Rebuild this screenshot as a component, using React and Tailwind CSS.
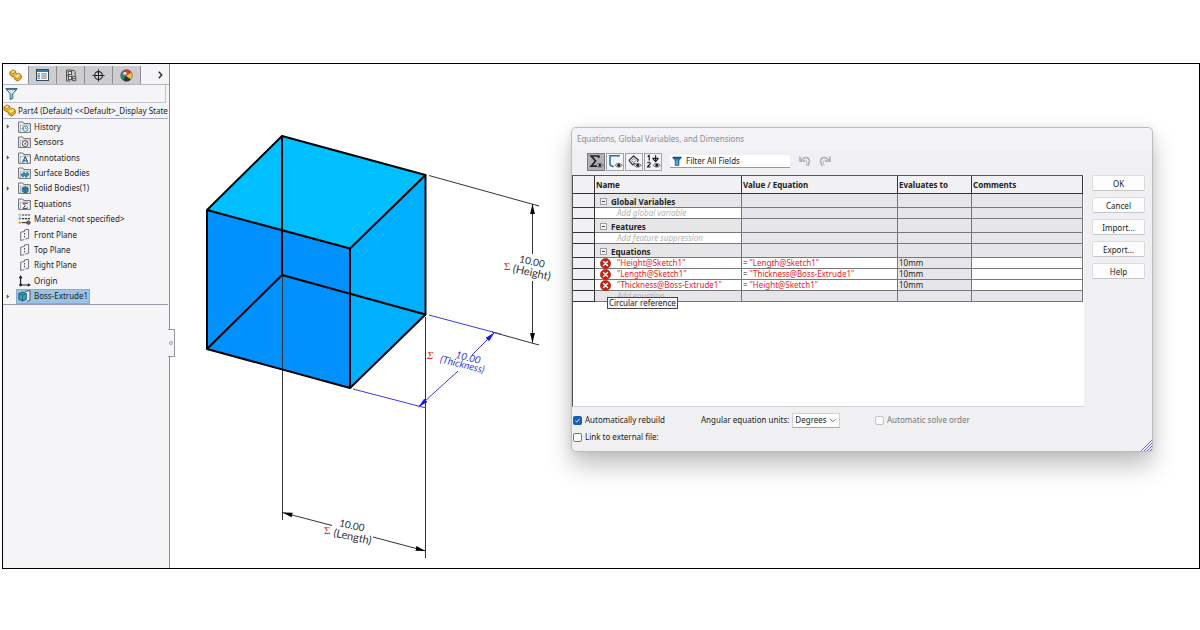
import React from "react";

/* ---------- icons ---------- */

function PartIcon() {
  return (
    <svg viewBox="0 0 14 14" className="h-[13px] w-[13px] shrink-0" aria-hidden="true">
      <path
        d="M1 3.2 4.4 1l3 1.5v2.3l1.1.7c.6-1 2.6-1.1 3.4-.2l1.3 1.5v3.3L9.4 13 6.2 11.2V9.6L1 6.4Z"
        fill="#f0bf2c"
        stroke="#7a5a10"
        strokeWidth=".8"
        strokeLinejoin="round"
      />
      <path d="M1.8 3.4 4.4 1.8l2.2 1.1-2.4 1.7ZM6.6 8.8l1.8-2.4c1-1.2 2.4-.8 3.2.2L9.2 9.9Z" fill="#ffe684" />
      <path d="M1.2 3.6 4.2 5v2.8M4.2 5l3-2M6.4 9 9.2 10.4V12.6M9.2 10.4 13 7.2" fill="none" stroke="#9a7418" strokeWidth=".6" />
    </svg>
  );
}

function ListTabIcon() {
  return (
    <svg viewBox="0 0 13 12" className="h-[12px] w-[13px]" aria-hidden="true">
      <rect x=".5" y=".5" width="12" height="11" fill="#fff" stroke="#33495c" />
      <rect x="1" y="1" width="11" height="2" fill="#2f7fb0" />
      <path d="M1.5 4.9h2.4M1.5 7h2.4M1.5 9.1h2.4" stroke="#2f7fb0" strokeWidth="1.3" />
      <path d="M5.3 4.9h5.6M5.3 7h5.6M5.3 9.1h5.6" stroke="#51606d" strokeWidth=".9" />
    </svg>
  );
}

function ConfigTabIcon() {
  return (
    <svg viewBox="0 0 12 13" className="h-[13px] w-[12px]" fill="none" stroke="#444" strokeWidth=".9" aria-hidden="true">
      <path d="M1.5 1v11h4M1.5 6.5h2M1.5 1h5v3.5" />
      <rect x="3.2" y="2.6" width="3.4" height="3" fill="#eee" />
      <rect x="3.4" y="7.4" width="3" height="3.2" fill="#eee" />
      <path d="M6.6 1.4h2.6l1 1.4v4M7.4 7.4h3.4v4.4H7.4zM8 9.6h2.4" />
    </svg>
  );
}

function TargetIcon() {
  return (
    <svg viewBox="0 0 13 13" className="h-[13px] w-[13px]" fill="none" stroke="#222" aria-hidden="true">
      <circle cx="6.5" cy="6.5" r="3.9" strokeWidth="1.1" />
      <path d="M6.5.5v12M.5 6.5h12" strokeWidth="1" />
    </svg>
  );
}

function AppearanceIcon() {
  return (
    <svg viewBox="0 0 13 13" className="h-[13px] w-[13px]" aria-hidden="true">
      <circle cx="6.5" cy="6.5" r="5.8" fill="#2f8a4c" />
      <path d="M6 7 2.6 2.2A5.8 5.8 0 0 1 11.4 3.4Z" fill="#dd3a2c" />
      <path d="M6 7 11.4 3.4a5.8 5.8 0 0 1-.6 7Z" fill="#f3c634" />
      <path d="M6 7 10.8 10.4A5.8 5.8 0 0 1 3 11.1Z" fill="#2b3640" />
      <path d="M6 7 .7 6.2A5.8 5.8 0 0 1 2.6 2.2Z" fill="#3f7fc4" />
      <ellipse cx="5" cy="4.4" rx="1.8" ry="1.4" fill="#fff" opacity=".8" />
      <circle cx="6.5" cy="6.5" r="5.8" fill="none" stroke="#444" strokeWidth=".5" />
    </svg>
  );
}

function FilterOutlineIcon() {
  return (
    <svg viewBox="0 0 13 13" className="h-[13px] w-[13px]" aria-hidden="true">
      <path d="M.8 1.6h11.4L7.8 6.8v4.6l-2.6 1V6.8Z" fill="#dcebf5" stroke="#2b5a7c" strokeWidth="1" strokeLinejoin="round" />
      <path d="M1.5 2.6h10" stroke="#2b5a7c" strokeWidth=".8" />
      <path d="M6 6.8v4.6" stroke="#54a0cc" strokeWidth="1.1" />
    </svg>
  );
}

function FolderIcon({ children }) {
  return (
    <svg viewBox="0 0 13 12" className="h-[12px] w-[13px] shrink-0" aria-hidden="true">
      <path d="M.6 11.4V1h4.2l1 1.6h6.6v8.8Z" fill="#f3f4f6" stroke="#5c6066" strokeWidth=".9" />
      <path d="M2.4 11V4.2h9.8" fill="none" stroke="#8b8f95" strokeWidth=".6" />
      {children}
    </svg>
  );
}

function HistoryIcon() {
  return (
    <FolderIcon>
      <circle cx="7.4" cy="7.6" r="2.6" fill="#fff" stroke="#2f79a8" strokeWidth=".9" />
      <path d="M7.4 6v1.7h1.4M3.6 8.2l1-1.4 1.2 1.4" fill="none" stroke="#2f79a8" strokeWidth=".8" />
    </FolderIcon>
  );
}

function SensorsIcon() {
  return (
    <FolderIcon>
      <circle cx="7.2" cy="7.6" r="2.9" fill="#fff" stroke="#444" strokeWidth="1" />
      <path d="M7.2 7.8 8.4 5.8" stroke="#c33" strokeWidth="1" />
      <circle cx="7.2" cy="7.8" r=".9" fill="#555" />
    </FolderIcon>
  );
}

function AnnotationsIcon() {
  return (
    <FolderIcon>
      <path d="M4.6 10.6 7.2 4.8l2.6 5.8M5.6 8.8h3.2" fill="none" stroke="#2569a0" strokeWidth="1.2" />
    </FolderIcon>
  );
}

function SurfaceIcon() {
  return (
    <FolderIcon>
      <path d="M2.8 7.8 6 5.2l1.6 1.4L9.6 5.2l1.6 2.4L8.2 10.4 6.4 8.8 4.6 10Z" fill="#2f8fb0" stroke="#1c5d78" strokeWidth=".6" />
    </FolderIcon>
  );
}

function SolidIcon() {
  return (
    <FolderIcon>
      <path d="M4.2 6 7.2 4.6 10.2 6v3.6L7.2 11 4.2 9.6Z" fill="#2f8fb0" stroke="#1a4f66" strokeWidth=".7" />
      <path d="M4.2 6l3 1.3 3-1.3M7.2 7.3V11" fill="none" stroke="#123c4f" strokeWidth=".6" />
    </FolderIcon>
  );
}

function EquationsIcon() {
  return (
    <FolderIcon>
      <path d="M9.2 6.2V5.2H5l2.2 2.5L5 10.4h4.2v-1" fill="none" stroke="#333" strokeWidth=".9" />
    </FolderIcon>
  );
}

function MaterialIcon() {
  return (
    <svg viewBox="0 0 13 12" className="h-[12px] w-[13px] shrink-0" aria-hidden="true">
      <path d="M4 2h8M4 5.6h8" stroke="#333" strokeWidth="1.1" strokeDasharray="2.2 .7" />
      <path d="M3.6 9.6h6" stroke="#333" strokeWidth="1.1" />
      <circle cx="1.8" cy="2" r="1.1" fill="#fff" stroke="#888" strokeWidth=".6" />
      <circle cx="1.8" cy="5.6" r="1.2" fill="#4f9fd0" />
      <circle cx="1.8" cy="9.6" r="1.4" fill="#e8b020" />
      <circle cx="10.4" cy="9.6" r="1.7" fill="#777" stroke="#222" strokeWidth=".9" />
    </svg>
  );
}

function PlaneIcon() {
  return (
    <svg viewBox="0 0 13 12" className="h-[12px] w-[13px] shrink-0" fill="none" stroke="#666" strokeWidth=".9" aria-hidden="true">
      <path d="M6.6 2.4 2.7 3.2v8.2l3.6-.8M6.6 2.4V.9l4-.6v9l-3.2.7" />
      <path d="M6.6 4v1.6M6.6 6.8v1.6" stroke="#333" />
    </svg>
  );
}

function OriginIcon() {
  return (
    <svg viewBox="0 0 13 12" className="h-[12px] w-[13px] shrink-0" aria-hidden="true">
      <path d="M2.6 2v8H11" fill="none" stroke="#222" strokeWidth="1.2" />
      <path d="M2.6 0 4.6 3.2H.6ZM13 10 9.8 8.2v3.6Z" fill="#222" />
      <circle cx="2.6" cy="10" r="1.4" fill="#222" />
    </svg>
  );
}

function ExtrudeIcon() {
  return (
    <svg viewBox="0 0 13 12" className="h-[12px] w-[13px] shrink-0" aria-hidden="true">
      <path d="M7 1.4 12 .6v9.6l-3 1.2" fill="#e8eef2" stroke="#444" strokeWidth=".9" />
      <path d="M.8 3.6 4.4 2l4 1.4v5.8L4.6 11 .8 9.4Z" fill="#3aa0b8" stroke="#13505f" strokeWidth=".8" />
      <path d="M.8 3.6l3.8 1.6 3.8-1.8M4.6 5.2V11" fill="none" stroke="#13505f" strokeWidth=".7" />
    </svg>
  );
}

function Eye() {
  return (
    <g>
      <path d="M7.2 11.3c1.8-2.4 5.2-2.4 7 0-1.8 2.3-5.2 2.3-7 0Z" fill="#fff" stroke="#333" strokeWidth=".8" />
      <circle cx="10.8" cy="11.2" r="1.5" fill="#222" />
    </g>
  );
}

function SigmaViewIcon() {
  return (
    <svg viewBox="0 0 15 15" className="h-[15px] w-[15px]" aria-hidden="true">
      <path d="M9.8 4V2H2.2l4.4 5-4.4 5.2h6" fill="none" stroke="#222" strokeWidth="1.7" />
      <Eye />
    </svg>
  );
}

function SketchViewIcon() {
  return (
    <svg viewBox="0 0 15 15" className="h-[15px] w-[15px]" aria-hidden="true">
      <path d="M11.8 1.8H2v7.6c0 2 1.4 3 3.6 3" fill="none" stroke="#1c6fa8" strokeWidth="1.5" />
      <Eye />
    </svg>
  );
}

function DimensionViewIcon() {
  return (
    <svg viewBox="0 0 15 15" className="h-[15px] w-[15px]" aria-hidden="true">
      <path d="M2 6.4 6.6 2l4.8 4-1.2 2M2 6.4l3.6 4.4 2.4-1.6" fill="none" stroke="#333" strokeWidth="1.3" strokeLinejoin="round" />
      <path d="M4.6 6.6 6.8 4.6l2 1.8-2.2 2.2Z" fill="#fff" stroke="#2a6e96" strokeWidth=".8" />
      <Eye />
    </svg>
  );
}

function OrderedViewIcon() {
  return (
    <svg viewBox="0 0 15 15" className="h-[15px] w-[15px]" aria-hidden="true">
      <path d="M1.6 2.4 3.2 1.4V6.4M1.6 9.2c.4-1.4 2.8-1.2 2.6.4-.2 1.2-2.2 2-2.6 3.2h2.8" fill="none" stroke="#222" strokeWidth="1.2" />
      <path d="M9.6 1.2v6M7 4.8l2.6 2.8 2.6-2.8M6.4 4.4h6.2" fill="none" stroke="#222" strokeWidth="1.2" />
      <Eye />
    </svg>
  );
}

function FunnelIcon() {
  return (
    <svg viewBox="0 0 10 10" className="h-[10px] w-[10px] shrink-0" aria-hidden="true">
      <path d="M.6 1h8.8L7 4.8V9.4H3.2V4.8Z" fill="#2b7fc2" stroke="#174d7c" strokeWidth=".6" />
      <path d="M.8 1.2h8.4v1.4H.8Z" fill="#174d7c" />
      <path d="M5 4.4v4.4" stroke="#9fd0f0" strokeWidth=".9" />
    </svg>
  );
}

function UndoIcon() {
  return (
    <svg viewBox="0 0 12 11" className="h-[11px] w-[12px]" fill="none" stroke="#b0b0b2" aria-hidden="true">
      <path d="M1 .6v4.6h4.8M1.2 5 4.4 2.2c3-1.8 6.6.2 6 3.6L8.8 10" strokeWidth="1.6" />
      <path d="M4.2 5c2-1.6 3.8-.6 3.6 1.4L7 9.4" strokeWidth=".9" />
    </svg>
  );
}

function ErrorIcon() {
  return (
    <svg viewBox="0 0 11 11" className="h-[11px] w-[11px] shrink-0" role="img" aria-label="Error">
      <circle cx="5.5" cy="5.5" r="5.1" fill="#c8200c" stroke="#9c1a08" strokeWidth=".6" />
      <path d="m3.5 3.5 4 4m0-4-4 4" stroke="#fff" strokeWidth="1.5" strokeLinecap="round" />
    </svg>
  );
}

/* ---------- feature tree ---------- */

const tabs = [
  { label: "Feature tree", Icon: PartIcon },
  { label: "Properties", Icon: ListTabIcon },
  { label: "Configurations", Icon: ConfigTabIcon },
  { label: "Dimension expert", Icon: TargetIcon },
  { label: "Display", Icon: AppearanceIcon },
];

const tree = [
  { name: "History", Icon: HistoryIcon, expandable: true },
  { name: "Sensors", Icon: SensorsIcon },
  { name: "Annotations", Icon: AnnotationsIcon, expandable: true },
  { name: "Surface Bodies", Icon: SurfaceIcon },
  { name: "Solid Bodies(1)", Icon: SolidIcon, expandable: true },
  { name: "Equations", Icon: EquationsIcon },
  { name: "Material <not specified>", Icon: MaterialIcon },
  { name: "Front Plane", Icon: PlaneIcon },
  { name: "Top Plane", Icon: PlaneIcon },
  { name: "Right Plane", Icon: PlaneIcon },
  { name: "Origin", Icon: OriginIcon },
  { name: "Boss-Extrude1", Icon: ExtrudeIcon, expandable: true, selected: true },
];

function Sidebar() {
  return (
    <aside className="relative w-[167px] shrink-0 border-r border-[#8f8f93] bg-[#f5f5f8] text-[8px]">
      <div className="flex h-[21px] items-stretch border-b border-[#b4b4b8] pt-[2px]">
        {tabs.map(({ label, Icon }, i) => (
          <button
            key={label}
            aria-label={label}
            className={
              i === 0
                ? "flex w-[25px] items-center justify-center bg-[#fbfbfd]"
                : "flex w-[28px] items-center justify-center border-l border-[#8e8e92] bg-[#cdcdd0]"
            }
          >
            <Icon />
          </button>
        ))}
        <button aria-label="More tabs" className="flex flex-1 items-center justify-center border-l border-[#8e8e92] pl-[10px]">
          <svg viewBox="0 0 5 8" className="h-[8px] w-[5px]" fill="none" stroke="#222" strokeWidth="1.3">
            <path d="m.8.8 3 3.2-3 3.2" />
          </svg>
        </button>
      </div>
      <label className="mr-[3px] flex h-[18px] items-center gap-1 border-r border-b border-[#c4c4c8] pl-[2px]">
        <FilterOutlineIcon />
        <input aria-label="Filter tree" className="min-w-0 flex-1 bg-transparent outline-none" />
      </label>
      <div className="mr-px flex h-[16px] items-center gap-[2px] overflow-hidden border-b border-[#a9abc9] whitespace-nowrap">
        <PartIcon />
        <span>Part4 (Default) &lt;&lt;Default&gt;_Display State</span>
      </div>
      <ul className="mr-px grid h-[186px] auto-rows-fr border-b border-[#9a9cab]">
        {tree.map(({ name, Icon, expandable, selected }) => (
          <li key={name} className="flex items-center">
            <span className="flex w-[13px] justify-start pl-[3px]">
              {expandable && (
                <svg viewBox="0 0 4 6" className="h-[5px] w-[4px]" aria-hidden="true">
                  <path d="M.5.4 3.5 3 .5 5.6Z" fill="#555" />
                </svg>
              )}
            </span>
            <button
              className={
                selected
                  ? "flex h-full items-center gap-[3px] border border-[#86acd0] bg-[#9ac3e6] pr-px pl-px"
                  : "flex h-full items-center gap-[3px] border border-transparent pr-px pl-px"
              }
            >
              <Icon />
              <span className="whitespace-nowrap">{name}</span>
            </button>
          </li>
        ))}
      </ul>
      <button
        aria-label="Collapse panel"
        className="absolute top-[265px] -right-[6px] flex h-[28px] w-[7px] items-center justify-center border border-l-0 border-[#97979b] bg-[#f5f5f8]"
      >
        <span className="h-1 w-1 rounded-full border border-[#a0a0a4]" />
      </button>
    </aside>
  );
}

/* ---------- model view ---------- */

function ModelView() {
  return (
    <svg viewBox="170 64 401 504" className="h-[504px] w-[401px] shrink-0" role="img" aria-label="Cube with height, length and thickness dimensions">
      <defs>
        <marker id="arrow" viewBox="0 0 10 6" refX="10" refY="3" markerWidth="10" markerHeight="6" markerUnits="userSpaceOnUse" orient="auto-start-reverse">
          <path d="M10 3 0 .6v4.8Z" fill="#000" />
        </marker>
        <marker id="arrowBlue" viewBox="0 0 10 6" refX="10" refY="3" markerWidth="10" markerHeight="6" markerUnits="userSpaceOnUse" orient="auto-start-reverse">
          <path d="M10 3 0 .6v4.8Z" fill="#1a1ae0" />
        </marker>
      </defs>

      <path d="M282 136 425.5 175 350 248.5 207 210Z" fill="#00bfff" />
      <path d="M207 210 350 248.5V388L207 349Z" fill="#0091ff" />
      <path d="M350 248.5 425.5 175V314.5L350 388Z" fill="#00afff" />

      <g stroke="#333" strokeWidth="1" fill="none">
        <path d="M282.5 275V520M425.5 317V558" />
        <path d="M429 175.5 539 206M492 332 539 345" />
        <path d="M332 525.5 282.5 512.5" markerEnd="url(#arrow)" />
        <path d="M373 537 425.5 551" markerEnd="url(#arrow)" />
        <path d="M532.5 254V204" markerEnd="url(#arrow)" />
        <path d="M532.5 281V343" markerEnd="url(#arrow)" />
      </g>

      <g stroke="#000" strokeWidth="2" fill="none" strokeLinejoin="round">
        <path d="M282 136 425.5 175 350 248.5 207 210Z" />
        <path d="M207 210V349L350 388V248.5M350 388 425.5 314.5V175" />
        <path d="M282 136V275L425.5 314.5M282 275 207 349" />
      </g>

      <g stroke="#3a3ae0" strokeWidth="1" fill="none">
        <path d="M429 315 502 334.5M353 389 426 408" />
        <path d="M472 355 494.5 332.5" markerEnd="url(#arrowBlue)" />
        <path d="M458 371 418.5 407" markerEnd="url(#arrowBlue)" />
      </g>

      <g className="font-['Lato',sans-serif]" fill="#333">
        <g transform="translate(532 262) rotate(12)">
          <text textAnchor="middle" y="3" className="text-[10px]">10.00</text>
          <text textAnchor="middle" x="2" y="14" className="text-[11px]">(Height)</text>
        </g>
        <g transform="translate(352 525) rotate(12)">
          <text textAnchor="middle" y="4" className="text-[10px]">10.00</text>
          <text textAnchor="middle" x="3" y="15" className="text-[11px]">(Length)</text>
        </g>
      </g>
      <g className="font-['Lato',sans-serif] italic" fill="#3a3ae0">
        <g transform="translate(468 358) rotate(14)">
          <text textAnchor="middle" y="3" className="text-[10px]">10.00</text>
          <text textAnchor="middle" x="-4" y="11" className="text-[10px]">(Thickness)</text>
        </g>
      </g>
      <g className="font-['Liberation_Serif',serif] text-[11px]" fill="#f02020">
        <text x="504" y="270">Σ</text>
        <text x="324" y="534">Σ</text>
        <text x="427" y="359" className="italic">Σ</text>
      </g>
    </svg>
  );
}

/* ---------- equations dialog ---------- */

const rows = [
  { kind: "section", name: "Global Variables" },
  { kind: "add", name: "Add global variable" },
  { kind: "section", name: "Features" },
  { kind: "add", name: "Add feature suppression" },
  { kind: "section", name: "Equations" },
  { kind: "equation", name: '"Height@Sketch1"', value: '"Length@Sketch1"', result: "10mm" },
  { kind: "equation", name: '"Length@Sketch1"', value: '"Thickness@Boss-Extrude1"', result: "10mm" },
  { kind: "equation", name: '"Thickness@Boss-Extrude1"', value: '"Height@Sketch1"', result: "10mm" },
  { kind: "add", name: "Add equation", tooltip: "Circular reference" },
];

const line = "border-[#77777a] border-r border-b p-0";

function EquationRow({ row }) {
  if (row.kind === "section") {
    return (
      <tr className="h-[14px] bg-[#e6e6e8]">
        <td className="border-r border-b border-[#333] bg-[#f1f0f3] p-0" />
        <td className={line}>
          <div className="flex items-center gap-[4px] pt-[2px] pl-[5px] font-bold">
            <button aria-label={`Collapse ${row.name}`} className="flex h-[7px] w-[7px] items-center justify-center border border-[#a0a0a4] bg-[#f5f5f5]">
              <span className="h-px w-[3px] bg-[#444]" />
            </button>
            {row.name}
          </div>
        </td>
        <td className={line} />
        <td className={line} />
        <td className={line} />
      </tr>
    );
  }
  if (row.kind === "add") {
    return (
      <tr className="h-[11px] bg-[#e6e6e8]">
        <td className="border-r border-b border-[#333] bg-[#f1f0f3] p-0" />
        <td className={row.tooltip ? line : `${line} bg-white`}>
          <div className="relative pl-[22px] text-[#b4b4b6] italic">
            {row.name}
            {row.tooltip && (
              <span role="tooltip" className="absolute top-[6px] left-[12px] z-10 border border-[#444] bg-[#f6f4f7] px-px leading-[10px] whitespace-nowrap text-[#222] not-italic">
                {row.tooltip}
              </span>
            )}
          </div>
        </td>
        <td className={line} />
        <td className={line} />
        <td className={line} />
      </tr>
    );
  }
  return (
    <tr className="h-[11px] bg-white">
      <td className="border-r border-b border-[#333] bg-[#f1f0f3] p-0" />
      <td className={line}>
        <div className="flex h-[10px] items-center gap-[6px] pl-[5px] text-[#f01820]">
          <ErrorIcon />
          {row.name}
        </div>
      </td>
      <td className={line}>
        <div className="flex gap-[2px] pl-px text-[#f01820]">
          <span className="text-[#222]">=</span>
          {row.value}
        </div>
      </td>
      <td className={`${line} bg-[#e6e6e8]`}>
        <div className="pl-px">{row.result}</div>
      </td>
      <td className={line} />
    </tr>
  );
}

const viewButtons = [
  { label: "Equation view", Icon: SigmaViewIcon, active: true },
  { label: "Sketch equation view", Icon: SketchViewIcon },
  { label: "Dimension view", Icon: DimensionViewIcon },
  { label: "Ordered view", Icon: OrderedViewIcon },
];

function EquationsDialog() {
  return (
    <section
      role="dialog"
      aria-labelledby="dialog-title"
      className="mt-[63px] mr-[46px] flex min-w-0 flex-1 flex-col self-start rounded-[5px] border border-[#bcbcc0] bg-[#f0eff2] text-[8px] text-[#222] shadow-[0_14px_24px_rgba(0,0,0,0.24),0_0_10px_rgba(0,0,0,0.08)]"
    >
      <h1 id="dialog-title" className="flex h-[22px] items-center rounded-t-[5px] bg-[#f3f2f6] pl-[5px] text-[#8d8d91]">
        Equations, Global Variables, and Dimensions
      </h1>
      <div className="flex h-[25px] items-center pb-[2px] pl-[15px]">
        <div className="flex gap-px">
          {viewButtons.map(({ label, Icon, active }) => (
            <button
              key={label}
              aria-label={label}
              aria-pressed={!!active}
              className={
                active
                  ? "flex h-[18px] w-[18px] items-center justify-center border border-[#7c7c80] bg-[#b2b2b5]"
                  : "flex h-[18px] w-[18px] items-center justify-center border border-[#a4a4a8] bg-[#f4f4f6]"
              }
            >
              <Icon />
            </button>
          ))}
        </div>
        <label className="ml-[8px] flex h-[13px] w-[120px] items-center gap-[4px] border-b border-[#98989c] bg-white pl-[2px]">
          <FunnelIcon />
          <input aria-label="Filter" defaultValue="Filter All Fields" className="min-w-0 flex-1 bg-transparent outline-none" />
        </label>
        <div className="ml-[9px] flex gap-[8px]">
          <button aria-label="Undo"><UndoIcon /></button>
          <button aria-label="Redo" className="-scale-x-100"><UndoIcon /></button>
        </div>
      </div>

      <div className="flex">
        <div className="min-h-[232px] min-w-0 flex-1 border-b border-l border-b-[#d4d4d8] border-l-[#555] bg-white pr-px">
          <table className="w-full table-fixed border-separate border-spacing-0 border-t border-[#555] text-left leading-[10px]">
            <colgroup>
              <col className="w-[22px]" />
              <col className="w-[147px]" />
              <col className="w-[156px]" />
              <col className="w-[74px]" />
              <col />
            </colgroup>
            <thead>
              <tr className="h-[18px] bg-[#f1f0f3]">
                <td className="border-r border-b border-[#333] p-0" />
                <th className="border-r border-b border-[#333] p-0 pl-px">Name</th>
                <th className="border-r border-b border-[#333] p-0 pl-px">Value / Equation</th>
                <th className="border-r border-b border-[#333] p-0 pl-px">Evaluates to</th>
                <th className="border-r border-b border-[#333] p-0 pl-px">Comments</th>
              </tr>
            </thead>
            <tbody>
              {rows.map((row) => (
                <EquationRow key={row.name} row={row} />
              ))}
            </tbody>
          </table>
        </div>
        <div className="mr-[7px] ml-[8px] flex w-[53px] flex-col gap-[6px]">
          {["OK", "Cancel", "Import...", "Export...", "Help"].map((label) => (
            <button key={label} className="h-[16px] rounded-[2px] border border-[#dcdce0] border-b-[#c6c6ca] bg-[#fdfdfe] leading-[13px]">
              {label}
            </button>
          ))}
        </div>
      </div>

      <div className="relative grid grid-cols-[127px_174px_1fr] gap-y-[2px] pt-[5px] pb-[7px] pl-px">
        <label className="flex h-[16px] items-center gap-[3px]">
          <input type="checkbox" defaultChecked className="peer sr-only" />
          <span className="flex h-[9px] w-[9px] items-center justify-center rounded-[2px] bg-[#1360b4]">
            <svg viewBox="0 0 8 8" className="h-[7px] w-[7px]" fill="none" stroke="#fff" strokeWidth="1">
              <path d="m1.6 4.2 1.6 1.6 3.2-3.6" />
            </svg>
          </span>
          Automatically rebuild
        </label>
        <div className="flex h-[16px] items-center gap-[3px] pl-px">
          <label htmlFor="units">Angular equation units:</label>
          <span className="relative flex h-[15px] w-[48px] items-center border border-[#d0d0d4] border-b-[#a8a8ac] bg-white">
            <select id="units" className="h-full w-full appearance-none bg-transparent pl-[2px] outline-none">
              <option>Degrees</option>
            </select>
            <svg viewBox="0 0 8 5" className="pointer-events-none absolute right-[2px] h-[5px] w-[8px]" fill="none" stroke="#666" strokeWidth=".9">
              <path d="m1 .8 3 3 3-3" />
            </svg>
          </span>
        </div>
        <label className="flex h-[16px] items-center gap-[3px] pl-px text-[#77777b]">
          <input type="checkbox" disabled className="h-[9px] w-[9px] appearance-none rounded-[2px] border border-[#c4c4c8] bg-[#f8f8fa]" />
          Automatic solve order
        </label>
        <label className="flex h-[14px] items-center gap-[3px]">
          <input type="checkbox" className="h-[9px] w-[9px] appearance-none rounded-[2px] border border-[#77777b] bg-white" />
          Link to external file:
        </label>
        <svg viewBox="0 0 11 11" className="absolute right-0 bottom-0 h-[11px] w-[11px]" stroke="#5a5ac4" strokeWidth=".9" aria-hidden="true">
          <path d="M0 11 11 0M3 11l8-8M6 11l5-5M9 11l2-2" />
        </svg>
      </div>
    </section>
  );
}

export default function App() {
  return (
    <div className="flex min-h-screen flex-col bg-white pt-[63px] pb-[62px] pl-[2px] font-['Noto_Sans','Open_Sans',sans-serif] text-[#222]">
      <main className="flex flex-1 items-stretch border border-black bg-white">
        <Sidebar />
        <ModelView />
        <EquationsDialog />
      </main>
    </div>
  );
}
